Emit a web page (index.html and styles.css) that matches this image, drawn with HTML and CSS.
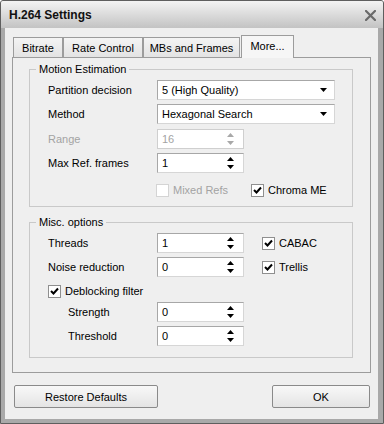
FILE: index.html
```html
<!DOCTYPE html>
<html>
<head>
<meta charset="utf-8">
<title>H.264 Settings</title>
<link rel="stylesheet" href="styles.css">
</head>
<body>
<div class="window">
  <div class="titlebar">
    <span class="title">H.264 Settings</span>
    <svg class="close" width="11" height="11" viewBox="0 0 11 11"><path d="M1 1L10 10M10 1L1 10" stroke="#6a6a6a" stroke-width="2.2" stroke-linecap="square"/></svg>
  </div>
  <div class="client">
    <div class="tabs">
      <div class="tab t1">Bitrate</div>
      <div class="tab t2">Rate Control</div>
      <div class="tab t3">MBs and Frames</div>
      <div class="tab t4 active">More...</div>
    </div>
    <div class="panel">
      <div class="group g1">
        <div class="gtitle">Motion Estimation</div>
        <div class="rows">
          <div class="row">
            <span class="lbl">Partition decision</span>
            <div class="combo"><span>5 (High Quality)</span><svg class="darrow" width="7" height="4" viewBox="0 0 7 4"><path d="M0 0H7L3.5 4Z" fill="#000"/></svg></div>
          </div>
          <div class="row">
            <span class="lbl">Method</span>
            <div class="combo"><span>Hexagonal Search</span><svg class="darrow" width="7" height="4" viewBox="0 0 7 4"><path d="M0 0H7L3.5 4Z" fill="#000"/></svg></div>
          </div>
          <div class="row r3">
            <span class="lbl disabled">Range</span>
            <div class="spin disabled-box"><span>16</span><span class="arrows"><svg width="7" height="4" viewBox="0 0 7 4"><path d="M3.5 0L7 4H0Z" fill="#a8a8a8"/></svg><svg width="7" height="4" viewBox="0 0 7 4"><path d="M0 0H7L3.5 4Z" fill="#a8a8a8"/></svg></span></div>
          </div>
          <div class="row">
            <span class="lbl">Max Ref. frames</span>
            <div class="spin"><span>1</span><span class="arrows"><svg width="7" height="4" viewBox="0 0 7 4"><path d="M3.5 0L7 4H0Z" fill="#000"/></svg><svg width="7" height="4" viewBox="0 0 7 4"><path d="M0 0H7L3.5 4Z" fill="#000"/></svg></span></div>
          </div>
          <div class="checks">
            <label class="check disabled mixed"><span class="cb cb-off"></span>Mixed Refs</label>
            <label class="check chroma"><span class="cb"><svg width="9" height="9" viewBox="0 0 9 9"><path d="M1 4L3.5 6.5L8 1.5" stroke="#000" stroke-width="2" fill="none"/></svg></span>Chroma ME</label>
          </div>
        </div>
      </div>

      <div class="group g2">
        <div class="gtitle">Misc. options</div>
        <div class="rows">
          <div class="row">
            <span class="lbl">Threads</span>
            <div class="spin"><span>1</span><span class="arrows"><svg width="7" height="4" viewBox="0 0 7 4"><path d="M3.5 0L7 4H0Z" fill="#000"/></svg><svg width="7" height="4" viewBox="0 0 7 4"><path d="M0 0H7L3.5 4Z" fill="#000"/></svg></span></div>
            <label class="check side"><span class="cb"><svg width="9" height="9" viewBox="0 0 9 9"><path d="M1 4L3.5 6.5L8 1.5" stroke="#000" stroke-width="2" fill="none"/></svg></span>CABAC</label>
          </div>
          <div class="row">
            <span class="lbl">Noise reduction</span>
            <div class="spin"><span>0</span><span class="arrows"><svg width="7" height="4" viewBox="0 0 7 4"><path d="M3.5 0L7 4H0Z" fill="#000"/></svg><svg width="7" height="4" viewBox="0 0 7 4"><path d="M0 0H7L3.5 4Z" fill="#000"/></svg></span></div>
            <label class="check side"><span class="cb"><svg width="9" height="9" viewBox="0 0 9 9"><path d="M1 4L3.5 6.5L8 1.5" stroke="#000" stroke-width="2" fill="none"/></svg></span>Trellis</label>
          </div>
          <div class="row deblock">
            <label class="check"><span class="cb"><svg width="9" height="9" viewBox="0 0 9 9"><path d="M1 4L3.5 6.5L8 1.5" stroke="#000" stroke-width="2" fill="none"/></svg></span>Deblocking filter</label>
          </div>
          <div class="row">
            <span class="lbl sub">Strength</span>
            <div class="spin"><span>0</span><span class="arrows"><svg width="7" height="4" viewBox="0 0 7 4"><path d="M3.5 0L7 4H0Z" fill="#000"/></svg><svg width="7" height="4" viewBox="0 0 7 4"><path d="M0 0H7L3.5 4Z" fill="#000"/></svg></span></div>
          </div>
          <div class="row">
            <span class="lbl sub">Threshold</span>
            <div class="spin"><span>0</span><span class="arrows"><svg width="7" height="4" viewBox="0 0 7 4"><path d="M3.5 0L7 4H0Z" fill="#000"/></svg><svg width="7" height="4" viewBox="0 0 7 4"><path d="M0 0H7L3.5 4Z" fill="#000"/></svg></span></div>
          </div>
        </div>
      </div>
    </div>
    <div class="buttons">
      <button class="btn restore">Restore Defaults</button>
      <button class="btn ok">OK</button>
    </div>
  </div>
</div>
</body>
</html>
```

FILE: styles.css
```css
html, body {
  margin: 0;
  padding: 0;
  background: #ffffff;
}

body {
  font-family: "Liberation Sans", Arial, sans-serif;
  font-size: 11px;
  color: #000;
}

.window {
  width: 384px;
  height: 424px;
  box-sizing: border-box;
  border: 1px solid #5e5e5e;
  border-radius: 3px 3px 0 0;
  background: #a9a9a9;
  display: flex;
  flex-direction: column;
}

.titlebar {
  flex: none;
  height: 27px;
  display: flex;
  align-items: center;
  justify-content: space-between;
  padding: 1px 7px 0 8px;
  box-sizing: border-box;
  background: linear-gradient(#f3f3f3, #c3c3c3);
  border-radius: 2px 2px 0 0;
}

.title {
  font-weight: bold;
  font-size: 12px;
  color: #111;
}

.close {
  display: block;
}

.client {
  flex: 1;
  margin: 0 5px 4px 4px;
  background: #efefef;
  display: flex;
  flex-direction: column;
  padding: 7px 7px 0 7px;
}

.tabs {
  display: flex;
  align-items: flex-end;
  height: 22px;
  padding-left: 1px;
}

.tab {
  box-sizing: border-box;
  height: 20px;
  border: 1px solid #9c9c9c;
  border-bottom: 0;
  background: linear-gradient(#f4f4f4, #e3e3e3);
  display: flex;
  align-items: center;
  justify-content: center;
  padding-top: 1px;
}

.t1 { width: 50px; }
.t2 { width: 80px; }
.t3 { width: 97px; }
.t4 { width: 53px; margin-left: 1px; }

.tab.active {
  height: 23px;
  margin-bottom: -1px;
  background: #f6f6f6;
  position: relative;
  z-index: 1;
  padding-top: 0;
  padding-bottom: 2px;
}

.panel {
  border: 1px solid #9c9c9c;
  background: #efefef;
  padding: 11px 17px 14px 16px;
  display: flex;
  flex-direction: column;
  gap: 15px;
}

.group {
  border: 1px solid #c9c9c9;
}

.gtitle {
  display: block;
  width: max-content;
  margin: -7px 0 0 6px;
  padding: 0 3px;
  line-height: 13px;
  height: 13px;
  background: #efefef;
}

.rows {
  display: flex;
  flex-direction: column;
  gap: 4px;
  padding: 4px 0 9px 18px;
}

.g2 .rows {
  padding-bottom: 11px;
}

.row {
  display: flex;
  align-items: center;
  height: 20px;
}

.r3 {
  margin-top: 1px;
}

.lbl {
  width: 109px;
  flex: none;
}

.lbl.sub {
  padding-left: 20px;
  width: 89px;
}

.disabled {
  color: #a3a3a3;
}

.combo, .spin {
  box-sizing: border-box;
  height: 20px;
  background: #fff;
  border: 1px solid #a7a7a7;
  border-right-color: #d6d6d6;
  border-bottom-color: #d6d6d6;
  display: flex;
  align-items: center;
  justify-content: space-between;
  padding: 0 7px 0 4px;
}

.combo {
  width: 178px;
}

.spin {
  width: 87px;
  padding-right: 9px;
}

.disabled-box {
  color: #a3a3a3;
  border-color: #cfcfcf;
}

.darrow {
  display: block;
}

.arrows {
  display: flex;
  flex-direction: column;
  gap: 4px;
}

.arrows svg {
  display: block;
}

.checks {
  display: flex;
  align-items: center;
  margin-top: 7px;
  padding-left: 108px;
  height: 13px;
}

.check {
  display: flex;
  align-items: center;
  gap: 4px;
  line-height: 13px;
}

.chroma {
  margin-left: 23px;
}

.side {
  margin-left: 18px;
}

.cb {
  box-sizing: border-box;
  width: 13px;
  height: 13px;
  border: 1px solid #8f8f8f;
  background: #fff;
  display: flex;
  align-items: center;
  justify-content: center;
}

.cb svg {
  display: block;
}

.cb-off {
  border-color: #d4d4d4;
}

.deblock {
  height: 17px;
  align-items: flex-end;
}

.buttons {
  display: flex;
  justify-content: space-between;
  padding: 12px 1px 0 2px;
}

.btn {
  box-sizing: border-box;
  height: 23px;
  font-family: "Liberation Sans", Arial, sans-serif;
  font-size: 11px;
  color: #000;
  border: 1px solid #8a8a8a;
  border-radius: 2px;
  background: linear-gradient(#f8f8f8, #e4e4e4);
  padding: 0;
}

.restore {
  width: 144px;
}

.ok {
  width: 98px;
}
```
